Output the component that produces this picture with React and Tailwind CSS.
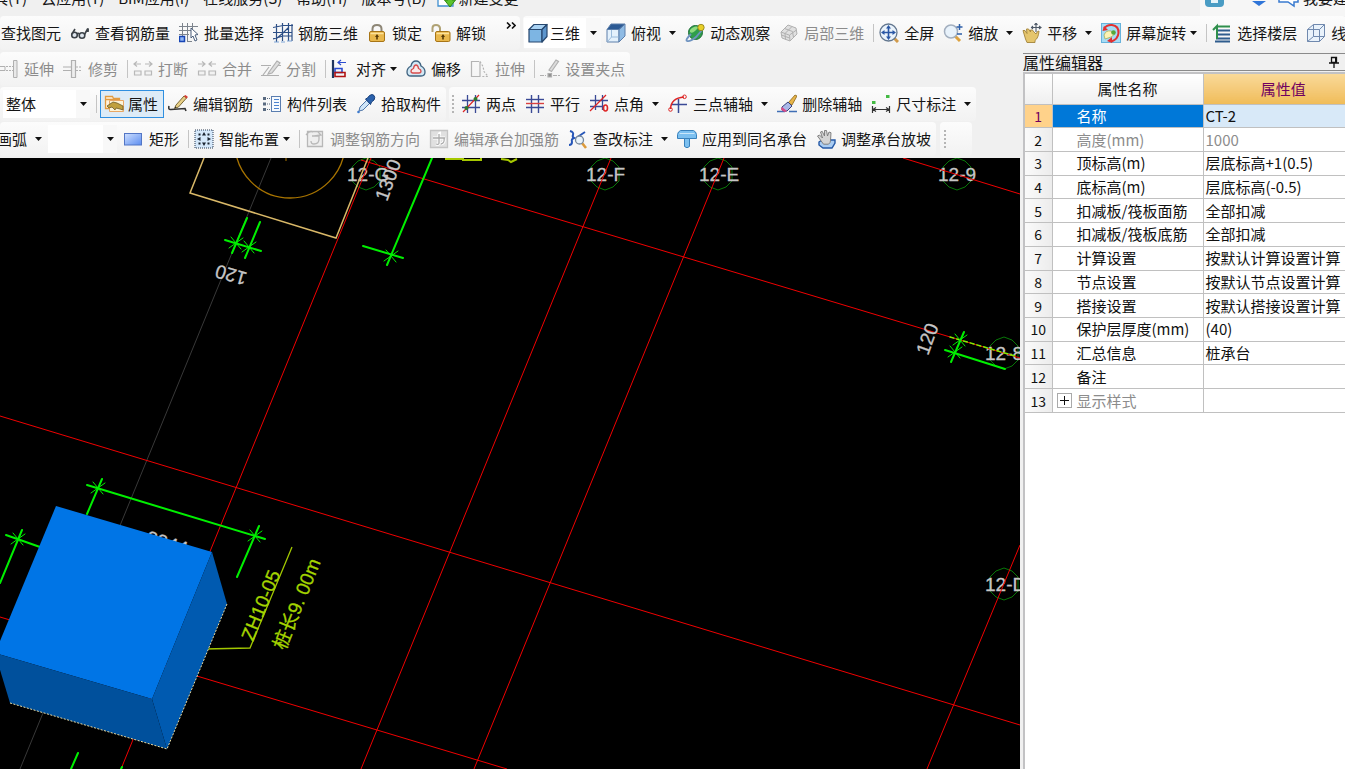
import React, { useState } from "react";

const uiFont = "font-['Noto_Sans_CJK_SC',sans-serif]";

// 20x20 toolbar glyphs
const icons = {
  glasses: (
    <g fill="none" stroke="#3c4248" strokeWidth="1.6">
      <circle cx="4.5" cy="12" r="2.8" fill="#dfe6ee" />
      <circle cx="12" cy="12.5" r="2.8" fill="#dfe6ee" />
      <path d="M7 11q1-1.5 2.4 0M2 11l3-5M14.5 11.5L17.5 6q1-1 .5 3" />
    </g>
  ),
  batch: (
    <g fill="none" stroke="#7d848d" strokeWidth="1">
      <path d="M3.500 0v13M8.500 0v19M13.500 0v6M0 3.500h19M0 7.500h12M0 11.500h10M8 18.500h5" />
      <path d="M.500 13.500h5v5h-5z" stroke="#1745b5" fill="#8fb5f5" strokeWidth="1.500" />
      <path d="M12 5l7 6.500-3 .5 2 5-2 1-2-5-2 2z" fill="#fff" stroke="#4b5f7c" />
    </g>
  ),
  mesh: (
    <g fill="none" stroke="#2d4f86" strokeWidth="1.2">
      <path d="M3.500 1v18M9.500 0v18M15.500 0v18M19 1v17M0 4.500l10-2h10M0 9.500h19M0 16l10-3h9M3 16l7-6 6-6" />
      <path d="M1 19h5M8 19h4M14 18h5" stroke="#7fa5d8" />
    </g>
  ),
  lock: (
    <g>
      <path d="M5.500 9V6q0-4 4.500-4t4.500 4v3" fill="none" stroke="#8d8676" strokeWidth="2" />
      <rect x="2.500" y="8.500" width="15" height="10" rx="1.500" fill="#e9b84c" stroke="#a87516" />
      <path d="M3.500 10.500h13" stroke="#fce29a" strokeWidth="1.500" />
      <path d="M10 11l2 3h-1.200v2.500H9.200V14H8z" fill="#573a06" />
    </g>
  ),
  unlock: (
    <g>
      <path d="M1.500 9V5q0-3 3.500-3t4 3v3" fill="none" stroke="#b0a274" strokeWidth="2" />
      <rect x="4.500" y="8.500" width="14.500" height="10" rx="1.500" fill="#e9b84c" stroke="#a87516" />
      <path d="M5.500 10.500h12.500" stroke="#fce29a" strokeWidth="1.500" />
      <path d="M12 11l2 3h-1.200v2.500h-1.600V14H10z" fill="#573a06" />
    </g>
  ),
  cube: (
    <g stroke="#26476e" strokeWidth="1.2" strokeLinejoin="round">
      <path d="M1 6.500h13v12.500H1z" fill="#7db5e3" />
      <path d="M1 6.500l5-5h13l-5 5z" fill="#a9d2f3" />
      <path d="M14 6.500l5-5v12l-5 5.500z" fill="#5c95cd" />
    </g>
  ),
  topView: (
    <g stroke="#5c7eaa" strokeWidth="1" strokeLinejoin="round">
      <path d="M1 6.500h12v12.500H1z" fill="#e4f1fc" />
      <path d="M13 6.500l6-5.500v12l-6 6z" fill="#8fbbe4" />
      <path d="M1 6.500L5 1h14l-6 5.500z" fill="#2c5a94" />
      <path d="M5.500 7v7l-4 4.500M5.500 14h7" fill="none" stroke="#9bbcdc" />
    </g>
  ),
  orbit: (
    <g>
      <circle cx="10.500" cy="9.500" r="7" fill="#2f9e4b" stroke="#1d6d36" />
      <path d="M5 7q4-5 9-3l-4 4q-3 3-5 1z" fill="#8fdc7f" />
      <path d="M2 18q-2-1 4-7M2 18q3 1 9-4l6-7" fill="none" stroke="#6e93c0" strokeWidth="1.800" />
      <circle cx="16" cy="4.500" r="3.200" fill="#e8cf28" stroke="#8c7c18" strokeWidth=".8" />
    </g>
  ),
  local3d: (
    <g fill="#e0e0e0" stroke="#b0b0b0" strokeWidth="1">
      <path d="M2 9l7-7 8 3 1 6-7 7-8-3z" />
      <path d="M5.500 5.500l8 3 1 6M2.500 12l8 3M6.500 16.500l-.500-6 7-7M11 18l-.500-6 7-5M2 9l8 3" fill="none" />
    </g>
  ),
  fullscreen: (
    <g>
      <path d="M15 15l4 4" stroke="#d19b4c" strokeWidth="3" />
      <circle cx="9.500" cy="9.500" r="8.500" fill="#eaf3fb" stroke="#63778f" strokeWidth="1.300" />
      <path d="M9.500 4v11M4 9.500h11" stroke="#2a57a5" strokeWidth="1.600" />
      <path d="M9.500 2l2.500 3.500H7zM9.500 17L7 13.500h5zM2 9.500L5.500 7v5zM17 9.500L13.500 12V7z" fill="#2a57a5" />
    </g>
  ),
  zoom: (
    <g>
      <path d="M12 13l5 5" stroke="#dca13f" strokeWidth="3" />
      <circle cx="8" cy="8.500" r="6.500" fill="#e8f2fb" stroke="#a3afbf" strokeWidth="1.500" />
      <path d="M16.500 1v6M13.500 4h6M14 11h5" stroke="#2e5fa8" strokeWidth="1.500" />
    </g>
  ),
  pan: (
    <g>
      <path d="M1 7.500q2-1.500 4 3L4.500 6q2-1.500 4 3l0-2q2-1 3.500 2l2 2q1-3 3-3-.500 7-4 9.500l0 2H5L3.500 16z" fill="#e5c56c" stroke="#a3833a" strokeWidth=".9" />
      <path d="M14 0v9M9.500 4.500h9M12.500 2L14 0l1.500 2M17 3l2 1.500-2 1.500M11 3L9.500 4.500 11 6" fill="none" stroke="#4e5967" strokeWidth="1.100" />
    </g>
  ),
  screenRotate: (
    <g>
      <rect x=".5" y=".5" width="19" height="19" fill="#a6dcf5" stroke="#67b3dc" />
      <path d="M3 5.500q3-4 8-3.500 7 1 6.500 8-.500 6-7 8.500" fill="none" stroke="#e23030" strokeWidth="2" />
      <path d="M11 14v6l-5-2zM1.500 8L3 3l4 4z" fill="#e23030" />
      <path d="M3 12q2-5 7-4l4 3-4 3-6 2z" fill="#fdf3b4" stroke="#9aa851" strokeWidth=".7" />
      <circle cx="12.500" cy="9.500" r="2.300" fill="#56a83a" />
    </g>
  ),
  floors: (
    <g strokeWidth="2">
      <path d="M6 7.500h12M5 11.500h13M4 15.500h14M3 18.500h15" stroke="#2f5d8e" />
      <path d="M5 3.500h13M1 7l4-4v13" stroke="#2f8f4c" fill="none" />
    </g>
  ),
  wireCube: (
    <g fill="#e9f2fb" stroke="#7089ae" strokeWidth="1">
      <path d="M1.500 6.500l6-5h11v12l-5 5h-12z" />
      <path d="M1.500 6.500h12l5-5M13.500 6.500v12M7.500 1.500v12h11M7.500 13.500l-6 5" fill="none" />
    </g>
  ),
  extend: (
    <g fill="none" stroke="#b0b0b0">
      <path d="M0 7.500h6v4H0" />
      <path d="M7 7.500h7M7 11.500h7" strokeDasharray="2 1" />
      <path d="M14.500 1.500h3.500v17h-3.500z" fill="#e9e9e9" />
    </g>
  ),
  trim: (
    <g fill="none" stroke="#b0b0b0" strokeWidth="1.200">
      <path d="M8.500 1.500h4v17h-4zM0 8h8M0 11.500h8" fill="#eee" />
      <path d="M13 8h6M13 11.500h6" strokeDasharray="2 1" />
    </g>
  ),
  breakApart: (
    <g fill="#f2f2f2" stroke="#b8b8b8" strokeWidth="1.200">
      <path d="M1.500 12h6.500v4H1.500zM12 12h6.500v4H12z" />
      <path d="M1 5h7M12 5h7M4 2.500L1 5l3 2.500M16 2.500L19 5l-3 2.500" fill="none" />
    </g>
  ),
  merge: (
    <g fill="#f2f2f2" stroke="#b8b8b8" strokeWidth="1.200">
      <path d="M1.500 12h6.500v4H1.500zM12 12h6.500v4H12z" />
      <path d="M1 5h7M12 5h7M5 2.500L8 5 5 7.500M15 2.500L12 5l3 2.500" fill="none" />
    </g>
  ),
  split: (
    <g fill="none" stroke="#b0b0b0" strokeWidth="1.200">
      <path d="M0 6.500h10M0 16.500h18M17 6.500h3" />
      <path d="M8 13l8-11 3 2-8 10-4 1z" fill="#dedede" />
      <path d="M2 16L8 8" />
    </g>
  ),
  align: (
    <g fill="none" strokeWidth="1.600">
      <path d="M2 1v18" stroke="#21365f" strokeWidth="2.200" />
      <path d="M4 9.500h7v4H4z" stroke="#2b4bd0" />
      <path d="M4 13.500h10v4H4z" stroke="#b01212" />
      <path d="M7 3.500h8M10 1L7 3.500 10 6" stroke="#2b4bd0" strokeWidth="1.200" />
    </g>
  ),
  offset: (
    <g strokeWidth="1.300">
      <path d="M10 2q4 0 5 5 4 2 4 6 0 4-4 4H5q-4 0-4-4 0-4 4-6 1-5 5-5z" fill="#d2e8f5" stroke="#3f6380" />
      <path d="M10 6q2 0 2.500 3.500Q15 10.500 15 12q0 2-2 2H7q-2 0-2-2 0-1.500 2.500-2.500Q8 6 10 6z" fill="#fbe9e9" stroke="#d84c4c" />
    </g>
  ),
  stretch: (
    <g fill="none" stroke="#b4b4b4" strokeWidth="1.200">
      <path d="M9 2.500H1.500v15H10V2.500" />
      <path d="M10 2.500l3 5 1 5 4 5h-7" strokeDasharray="2 1.500" />
    </g>
  ),
  grips: (
    <g fill="none" stroke="#b0b0b0" strokeWidth="1.200">
      <path d="M0 16.500h6M13 16.500h7" strokeDasharray="4 1" />
      <path d="M9 11l7-10 2.500 1.500-7 10z" fill="#dcdcdc" />
      <path d="M8 14.500h3.500V18H8z" fill="#8f8f8f" />
    </g>
  ),
  properties: (
    <g>
      <path d="M1.500 2.500h7l1 2h6v10h-14z" fill="#fff3dd" stroke="#e29a3f" strokeWidth="1.300" />
      <path d="M2 5.500h13" stroke="#e29a3f" strokeWidth="1.500" />
      <path d="M5.500 6.500h14v11h-14z" fill="#fdf4d8" stroke="#e8a765" />
      <path d="M3 12l6-4 4 1 6 3v4l-3-1-4-1-1 2-3-3-3 1z" fill="#c0a03e" stroke="#6b5a28" strokeWidth=".8" />
    </g>
  ),
  editBar: (
    <g>
      <path d="M1 12q-1 4 2 3.500l14-1 1 2.500" fill="none" stroke="#333" strokeWidth="1.600" />
      <path d="M8 11l8-9 2.500 2-8 9-4 1.500z" fill="#e8cf86" stroke="#6b5a28" strokeWidth=".9" />
      <path d="M16 2l1.500-1L20 3l-1.500 1.500z" fill="#d93a32" />
      <path d="M6.500 14.500l2-1-1-1z" fill="#222" />
    </g>
  ),
  list: (
    <g>
      <rect x="9.500" y="2.500" width="9" height="15" fill="#f6fafe" stroke="#5b7eb0" />
      <path d="M12 5.500h5M12 8.500h5M12 11.500h5M12 14.500h5" stroke="#4c83cf" strokeWidth="1.200" />
      <path d="M1 3h3v3H1zM1 8.500h3v3H1zM1 14h3v3H1z" fill="#596a80" />
      <path d="M5 4.500h3M5 10h3M5 15.500h3" stroke="#596a80" strokeDasharray="1 1" />
    </g>
  ),
  pipette: (
    <g>
      <path d="M3 17l1-4 7-7 3 3-7 7z" fill="#cfe5f8" stroke="#5277a8" />
      <path d="M9.500 5l2-1 2-2.500q3-2 4.500 0t0 4.500L15.500 8l-1 2.500z" fill="#2b62ad" stroke="#173f7a" />
      <circle cx="2.500" cy="18" r="1.300" fill="#3c7ace" />
    </g>
  ),
  twoPoint: (
    <g fill="none">
      <path d="M6.500 1v18M14.500 1v18M1 6.500h18M1 13.500h18" stroke="#3a4a96" strokeWidth="1.300" />
      <path d="M2 18L18 1" stroke="#dd2525" strokeWidth="1.200" />
      <circle cx="14.500" cy="5" r="2" fill="#2d7a2d" />
      <circle cx="5.500" cy="14" r="2" fill="#2d7a2d" />
    </g>
  ),
  parallel: (
    <g fill="none" strokeWidth="1.400">
      <path d="M6.500 1v18M13.500 1v18M1 13.500h18" stroke="#3a4a96" />
      <path d="M1 5.500h18" stroke="#3a4a96" />
      <path d="M1 9.500h18" stroke="#d94040" />
    </g>
  ),
  pointAngle: (
    <g fill="none">
      <path d="M6.500 1v15M13.500 1v15M1 6.500h18M1 12.500h14" stroke="#3a4a96" strokeWidth="1.300" />
      <path d="M1 17L17 1" stroke="#dd2525" strokeWidth="1.300" />
      <ellipse cx="16.500" cy="14" rx="2" ry="3" stroke="#dd2525" strokeWidth="1.600" />
    </g>
  ),
  threePoint: (
    <g fill="none">
      <path d="M10.500 5v14M4 10.500h15" stroke="#3a4a96" strokeWidth="1.500" />
      <path d="M2.500 15Q3 4 16 3" stroke="#dd2525" strokeWidth="1.500" />
      <circle cx="2.500" cy="15.500" r="1.800" stroke="#dd2525" />
      <circle cx="16.500" cy="2.800" r="1.800" stroke="#dd2525" />
    </g>
  ),
  eraseAxis: (
    <g>
      <path d="M0 17.500h8M12 17.500h8" stroke="#3f6eb5" strokeWidth="1.500" />
      <path d="M11 9l7-8 2 1-5 9z" fill="#e7b54a" stroke="#8c6518" strokeWidth=".8" />
      <path d="M5 13l6-5 4 4-5 5q-3 1-5-1z" fill="#a9b8e8" stroke="#39427c" />
      <path d="M5 13l5 4-2 1q-3-.500-4-3z" fill="#d94d8a" />
    </g>
  ),
  dimension: (
    <g fill="none">
      <path d="M1.500 12v7M18.500 12v7M2 15.500h16M5 13.500l-3 2 3 2M15 13.500l3 2-3 2" stroke="#333" strokeWidth="1.200" />
      <path d="M1 7h3.500v3H1zM15 1h3.500v3H15z" fill="#44ba44" />
    </g>
  ),
  rect: (
    <g>
      <defs>
        <linearGradient id="rectFill" x1="0" y1="0" x2="1" y2="1">
          <stop offset="0" stopColor="#cfe0ff" />
          <stop offset="1" stopColor="#5c8df0" />
        </linearGradient>
      </defs>
      <rect x=".5" y="4.500" width="17" height="11.500" fill="url(#rectFill)" stroke="#5376c5" />
    </g>
  ),
  smart: (
    <g>
      <rect x="1" y="1" width="18" height="18" fill="#d5e8fa" stroke="#263850" strokeDasharray="1 1" />
      <path d="M10 3l2 3.500H8zM10 17l-2-3.500h4zM3 10l3.500-2v4zM17 10l-3.500 2V8z" fill="#1b2430" />
      <path d="M4.500 4.500h2v2h-2zM13.500 4.500h2v2h-2zM4.500 13.500h2v2h-2zM13.500 13.500h2v2h-2z" fill="#1b2430" />
    </g>
  ),
  barDirection: (
    <g fill="none" stroke="#b8b8b8" strokeWidth="1.300">
      <path d="M2.500 2.500h15v15h-15z" fill="#eeeeee" />
      <path d="M1 6q4-5 7-3M7 7h7v3q0 5-5 5-3 0-3-3M13 3l3 3-7 1" />
    </g>
  ),
  editReinforce: (
    <g fill="none" strokeWidth="1.300">
      <path d="M1.500 1.500h17v17h-17z" fill="#e0e0e0" stroke="#c4c4c4" />
      <path d="M4 9h12M10 5v9q0 2-3 1M15 9q1 5-3 6M12 4q-2 0-2 2" stroke="#fff" strokeWidth="3" />
      <path d="M4 9h12M10 5v9q0 2-3 1M15 9q1 5-3 6" stroke="#ababab" />
    </g>
  ),
  checkMark: (
    <g fill="none">
      <path d="M2 2q4 1 3 4-1 2 1 3-3 1-2 4 0 3-3 3" stroke="#2455b8" strokeWidth="2" />
      <path d="M8 9l9-6" stroke="#2455b8" strokeWidth="1.800" />
      <path d="M14 14l4 5" stroke="#dc9a3a" strokeWidth="2.600" />
      <circle cx="11.500" cy="11" r="4" fill="#e9f3fb" stroke="#75879c" strokeWidth="1.300" />
    </g>
  ),
  applyCap: (
    <g fill="#7cc0f0" stroke="#3881bc" strokeWidth="1">
      <path d="M3.500 1.500h13q2.500 1 3 4v4H.500v-4q.500-3 3-4z" />
      <path d="M7.500 9.500h5v8q-2.500 2.500-5 0z" />
      <path d="M2.500 4.500h15" stroke="#c9e7fb" />
    </g>
  ),
  slope: (
    <g>
      <path d="M3 13l3-2h13v3l-3 5H7l-4-3z" fill="#a9ccf2" stroke="#2458a6" strokeWidth="1.400" />
      <path d="M1.500 7l2-1 3 3-2-6 1.700-.700L8.500 7V1.500h2L11.500 7l1.500-4 2 .700-.500 8q0 2-2 3.500H7.500z" fill="#d4d4d4" stroke="#777" strokeWidth=".9" />
    </g>
  ),
};

function Icon({ name }) {
  return (
    <svg viewBox="0 0 20 20" className="w-5 h-5 shrink-0" aria-hidden="true">
      {icons[name]}
    </svg>
  );
}

function Caret({ className = "" }) {
  return (
    <svg viewBox="0 0 7 4" className={`w-[7px] h-1 shrink-0 ${className}`} aria-hidden="true">
      <path d="M0 0h7L3.500 4z" fill="#111" />
    </svg>
  );
}

function Tool({ icon, label, muted, caret, className = "" }) {
  return (
    <button
      type="button"
      disabled={muted}
      className={`flex items-center shrink-0 whitespace-nowrap ${muted ? "text-[#8c8c8c]" : "text-[#151515]"} ${className}`}
    >
      {icon && <Icon name={icon} />}
      <span className={icon ? "ml-[5px]" : ""}>{label}</span>
      {caret && <Caret className={caret === "near" ? "ml-1" : "ml-2"} />}
    </button>
  );
}

function Divider() {
  return <span className="w-px h-[18px] bg-[#c4c4c4] -mr-1 shrink-0" />;
}

function Grip() {
  return <span className="h-[18px] border-l-2 border-dotted border-[#b5b5b5] -mr-0.5 shrink-0" />;
}

function Group({ children, className = "" }) {
  return (
    <div className={`flex items-center gap-[9px] h-[34px] rounded-sm bg-linear-to-b from-[#fcfcfc] to-[#f2f2f2] ${className}`}>
      {children}
    </div>
  );
}

function Combo({ label, options, className = "" }) {
  return (
    <span className={`relative shrink-0 h-[28px] ${className}`}>
      <select aria-label={label} className="appearance-none w-full h-full bg-white pl-[3px] pr-4 outline-none">
        {options.map((o) => (
          <option key={o}>{o}</option>
        ))}
      </select>
      <span className="absolute right-0 inset-y-0 w-[14px] bg-[#f8f8f8] flex items-center justify-center pointer-events-none">
        <Caret />
      </span>
    </span>
  );
}

function MenuBar() {
  const menus = ["工具(T)", "云应用(Y)", "BIM应用(I)", "在线服务(S)", "帮助(H)", "版本号(B)"];
  return (
    <header className="h-4 overflow-hidden flex justify-between shrink-0">
      <nav className="flex gap-[14px] leading-5 -mt-3 -ml-[22px]">
        {menus.map((m) => (
          <button type="button" key={m} className="whitespace-nowrap shrink-0 h-5">{m}</button>
        ))}
        <button type="button" className="flex items-center gap-0.5 whitespace-nowrap h-5 -ml-1">
          <svg viewBox="0 0 20 20" className="w-5 h-5" aria-hidden="true">
            <path d="M2 1h11l4 4v13H2z" fill="#fff" stroke="#3f8fd0" strokeWidth="1.300" />
            <path d="M12 8h4v4h3.500L14 19 8.500 12H12z" fill="#5cc32c" stroke="#2f8612" />
          </svg>
          新建变更
        </button>
      </nav>
      <div className="flex items-start bg-[#f6f6f6] w-[145px] pl-[5px] shrink-0">
        <svg viewBox="0 0 98 16" className="w-[98px] h-4 shrink-0" aria-hidden="true">
          <path d="M0 0h19v3q0 4-4 4H4q-4 0-4-4z" fill="#4a9cc4" />
          <path d="M6 0h7v3H6z" fill="#e6f4fa" />
          <path d="M47 1h14l-7 5z" fill="#2f75d8" />
          <path d="M74 0v2h9l6 4V2h4V0" fill="#fff" stroke="#3a7bd0" strokeWidth="1.500" />
        </svg>
        <button type="button" className="whitespace-nowrap leading-5 -mt-3">我要建议</button>
      </div>
    </header>
  );
}

function Star({ x, y }) {
  return <path d={`M${x - 7} ${y + 5}L${x + 7} ${y - 5}M${x - 5} ${y - 6}L${x + 5} ${y + 6}`} strokeWidth="1" />;
}

function AxisMark({ x, y, label }) {
  return (
    <g>
      <polygon
        points="0,-16 8,-13 14,-7 14,7 8,13 0,16 -8,13 -14,7 -14,-7 -8,-13"
        transform={`translate(${x} ${y})`}
        fill="none"
        stroke="#087808"
      />
      <text x={x - 19} y={y + 7} fill="#c6c6c6" stroke="#c6c6c6" strokeWidth=".3">{label}</text>
    </g>
  );
}

function DrawingView() {
  return (
    <main className="flex-1 min-h-0 mt-px bg-black overflow-hidden">
      <svg
        viewBox="0 158 1020 611"
        preserveAspectRatio="xMinYMin slice"
        className="block w-full h-full font-['Liberation_Sans','Noto_Sans_CJK_SC',sans-serif] text-[19px]"
      >
        <path d="M271 158L20 769" stroke="#383838" fill="none" />
        <AxisMark x={366} y={174} label="12-G" />
        <AxisMark x={605} y={174} label="12-F" />
        <AxisMark x={718} y={174} label="12-E" />
        <AxisMark x={957} y={174} label="12-9" />
        <AxisMark x={1004} y={353} label="12-8" />
        <AxisMark x={1004} y={584} label="12-D" />

        {/* axis grid */}
        <g stroke="#f00000" fill="none">
          <path d="M361 160L1020 358M903 158L1020 194M0 416L1020 725M0 617L507 769" />
          <path d="M371 158L121 769M611 158L361 769M724 158L474 769M1020 545L927 769" />
        </g>

        {/* pile cap outline */}
        <path d="M204 158L190 193 336 238 368 158" stroke="#d9b868" fill="none" strokeWidth="1.5" />
        <circle cx="290" cy="143" r="55" stroke="#a87400" fill="none" strokeWidth="1.3" />
        <path d="M286 158v3" stroke="#a87400" />
        <path d="M445 159h18v1h18v-2M501 159l7 1 3 2 6-3" stroke="#a6c800" fill="none" strokeWidth="2" />

        {/* dimension lines */}
        <g stroke="#00f000" strokeWidth="2" fill="none" strokeLinecap="round">
          <path d="M247 218L232 253M260 222L245 258M225 240L261 251" />
          <path d="M432 158L387 265M363 246L403 258" />
          <path d="M945 350L1005 369M964 332L951 362" />
          <path d="M87 485L265 539M102 479L87 514M259 526L237 577" />
          <path d="M6 535L40 547M22 530L0 583M78 753L71 769M122 767L121 769" />
          <path d="M950 337L1015 356" stroke="#7cf000" strokeWidth="1.5" strokeDasharray="4 3" />
          <Star x={236} y={243} />
          <Star x={249} y={247} />
          <Star x={391} y={256} />
          <Star x={960} y={340} />
          <Star x={955} y={352} />
          <Star x={98} y={488} />
          <Star x={255} y={536} />
          <Star x={18} y={539} />
        </g>
        <g fill="#c6c6c6" stroke="#c6c6c6" strokeWidth=".3">
          <text transform="translate(248 273) rotate(196)">120</text>
          <text transform="translate(387 202) rotate(-70)">1300</text>
          <text transform="translate(928 356) rotate(-70)">120</text>
          <text transform="translate(145 543) rotate(17)">2244</text>
        </g>

        {/* pile label */}
        <path d="M205 649L250 648 292 547" stroke="#a2c800" fill="none" strokeWidth="1.3" />
        <g fill="#a4d400" stroke="#a4d400" strokeWidth=".3">
          <text transform="translate(253 642) rotate(-68)">ZH10-05</text>
          <text transform="translate(285 651) rotate(-68)">桩长9. 00m</text>
        </g>

        {/* pile cap solid */}
        <path d="M56 506L212 552 152 699 -5 653z" fill="#0075e6" />
        <path d="M212 552L227 604 167 749 152 699z" fill="#005ab0" />
        <path d="M-5 653L152 699 167 749 10 703z" fill="#00509c" />
        <path d="M10 703L167 749 227 604" stroke="#e8d9a0" fill="none" strokeDasharray="2 1.5" />
      </svg>
    </main>
  );
}

const rows = [
  { name: "名称", value: "CT-2" },
  { name: "高度(mm)", value: "1000", muted: true },
  { name: "顶标高(m)", value: "层底标高+1(0.5)" },
  { name: "底标高(m)", value: "层底标高(-0.5)" },
  { name: "扣减板/筏板面筋", value: "全部扣减" },
  { name: "扣减板/筏板底筋", value: "全部扣减" },
  { name: "计算设置", value: "按默认计算设置计算" },
  { name: "节点设置", value: "按默认节点设置计算" },
  { name: "搭接设置", value: "按默认搭接设置计算" },
  { name: "保护层厚度(mm)", value: "(40)" },
  { name: "汇总信息", value: "桩承台" },
  { name: "备注", value: "" },
  { name: "显示样式", value: "", muted: true, expandable: true },
];

function PropertyEditor() {
  const [selected, setSelected] = useState(0);

  return (
    <aside className="w-[322px] shrink-0 ml-[3px] mt-[3px] flex flex-col overflow-hidden">
      <div className="flex items-center justify-between h-[18px] border-y border-[#8a8a8a] shrink-0">
        <h2 className="text-base leading-4">属性编辑器</h2>
        <button type="button" aria-label="固定" className="mr-1.5">
          <svg viewBox="0 0 10 12" className="w-2.5 h-3">
            <path d="M2.500 1.500h5v5h-5zM0 7h10M5 7v5" fill="none" stroke="#111" strokeWidth="1.300" />
            <path d="M7 1v6" stroke="#111" strokeWidth="2" />
          </svg>
        </button>
      </div>
      <div className="flex-1 mt-px border-t-2 border-l-2 border-[#c2c2c4] bg-white">
        <table className="w-full h-[339px] table-fixed border-collapse leading-5">
          <colgroup>
            <col className="w-[27px]" />
            <col className="w-[151px]" />
            <col />
          </colgroup>
          <thead>
            <tr className="h-[30px]">
              <th className="border-r border-b border-[#c0c0c0] bg-linear-to-b from-white to-[#efefef]" />
              <th className="font-normal border-r border-b border-[#c0c0c0] bg-linear-to-b from-white to-[#f0f0f0]">属性名称</th>
              <th className="font-normal border-b border-[#c0c0c0] bg-linear-to-b from-[#f9d998] to-[#f0bc58] text-[#700060] pl-[18px]">属性值</th>
            </tr>
          </thead>
          <tbody>
            {rows.map((row, i) => {
              const active = i === selected;
              return (
                <tr key={row.name} onClick={() => setSelected(i)} className={row.muted ? "text-[#8c8c8c]" : "text-[#111]"}>
                  <td
                    className={`p-0 text-center text-sm leading-5 border-r border-b border-[#c0c0c0] ${
                      active ? "bg-[#ffd28a] text-[#700060]" : "bg-linear-to-r from-[#fafafa] to-[#ececec] text-[#111]"
                    }`}
                  >
                    {i + 1}
                  </td>
                  <td className={`p-0 border-r border-b border-[#c0c0c0] whitespace-nowrap ${active ? "bg-[#0078d8] text-white" : ""}`}>
                    <span className="flex items-center">
                      <span className="w-[24px] flex justify-center">
                        {row.expandable && (
                          <button
                            type="button"
                            aria-label="展开"
                            className="w-[15px] h-[15px] border border-[#aaa] bg-white text-black flex items-center justify-center"
                          >
                            <svg viewBox="0 0 9 9" className="w-[9px] h-[9px]">
                              <path d="M0 4.500h9M4.500 0v9" stroke="#111" />
                            </svg>
                          </button>
                        )}
                      </span>
                      {row.name}
                    </span>
                  </td>
                  <td className={`p-0 pl-0.5 border-b border-[#c0c0c0] whitespace-nowrap overflow-hidden ${active ? "bg-[#d8e9f8]" : ""}`}>
                    {row.value}
                  </td>
                </tr>
              );
            })}
          </tbody>
        </table>
      </div>
    </aside>
  );
}

export default function App() {
  return (
    <div className={`h-screen flex flex-col overflow-hidden bg-[#f0f0f0] text-[15px] leading-5 text-[#151515] ${uiFont}`}>
      <MenuBar />

      <div className="flex shrink-0 gap-[3px] overflow-hidden">
        <Group className="pl-px pr-1">
          <Tool label="查找图元" />
          <Tool icon="glasses" label="查看钢筋量" />
          <Tool icon="batch" label="批量选择" />
          <Tool icon="mesh" label="钢筋三维" />
          <Tool icon="lock" label="锁定" />
          <Tool icon="unlock" label="解锁" />
          <button type="button" aria-label="更多" className="ml-[11px] self-start mt-1.5">
            <svg viewBox="0 0 10 7" className="w-2.5 h-[7px]">
              <path d="M1 .5L4 3.500 1 6.500M6 .5L9 3.500 6 6.500" fill="none" stroke="#111" strokeWidth="1.600" />
            </svg>
          </button>
        </Group>
        <Group className="flex-1 pl-px">
          <span className="flex items-center h-[30px] bg-white px-1 -mr-1 shrink-0">
            <button type="button" className="flex items-center gap-0.5">
              <Icon name="cube" />
              三维
            </button>
            <button type="button" aria-label="视图模式" className="ml-1.5 -mr-1 w-[15px] h-[30px] flex items-center justify-center bg-[#f8f8f8]">
              <Caret />
            </button>
          </span>
          <Tool icon="topView" label="俯视" caret="far" />
          <Tool icon="orbit" label="动态观察" />
          <Tool icon="local3d" label="局部三维" muted />
          <Divider />
          <Tool icon="fullscreen" label="全屏" />
          <Tool icon="zoom" label="缩放" caret="far" />
          <Tool icon="pan" label="平移" caret="far" />
          <Tool icon="screenRotate" label="屏幕旋转" caret="near" />
          <Divider />
          <Tool icon="floors" label="选择楼层" />
          <Tool icon="wireCube" label="线框" />
        </Group>
      </div>

      <div className="flex flex-1 min-h-0">
        <div className="flex flex-col flex-1 min-w-0 gap-px pt-0.5 overflow-hidden">
          <div className="flex shrink-0">
            <Group className="pr-[5px]">
              <Tool icon="extend" label="延伸" muted className="-ml-px" />
              <Tool icon="trim" label="修剪" muted />
              <Divider />
              <Tool icon="breakApart" label="打断" muted />
              <Tool icon="merge" label="合并" muted />
              <Tool icon="split" label="分割" muted />
              <Divider />
              <Tool icon="align" label="对齐" caret="near" />
              <Tool icon="offset" label="偏移" />
              <Tool icon="stretch" label="拉伸" muted />
              <Divider />
              <Tool icon="grips" label="设置夹点" muted />
            </Group>
          </div>

          <div className="flex shrink-0 gap-[3px]">
            <Group className="pl-[3px] pr-[5px]">
              <Combo label="显示范围" options={["整体"]} className="w-[87px] -mr-[3px]" />
              <Divider />
              <button
                type="button"
                aria-pressed="true"
                className="flex items-center gap-1 h-[28px] pl-[3px] pr-[5px] -ml-0.5 -mr-[5px] border border-[#2f8fe0] bg-[#dcebf7] shrink-0"
              >
                <Icon name="properties" />
                属性
              </button>
              <Tool icon="editBar" label="编辑钢筋" />
              <Tool icon="list" label="构件列表" />
              <Tool icon="pipette" label="拾取构件" />
            </Group>
            <Group className="pl-[3px] pr-[5px]">
              <Grip />
              <Tool icon="twoPoint" label="两点" />
              <Tool icon="parallel" label="平行" />
              <Tool icon="pointAngle" label="点角" caret="far" />
              <Tool icon="threePoint" label="三点辅轴" caret="far" />
              <Tool icon="eraseAxis" label="删除辅轴" />
              <Tool icon="dimension" label="尺寸标注" caret="far" />
            </Group>
          </div>

          <div className="flex shrink-0 gap-1">
            <Group className="pr-[5px]">
              <Tool label="画弧" caret="far" className="-ml-[3px]" />
              <Combo label="绘制方式" options={[""]} className="w-[69px] -ml-[3px] -mr-0.5" />
              <Tool icon="rect" label="矩形" />
              <Divider />
              <Tool icon="smart" label="智能布置" caret="near" />
              <Divider />
              <Tool icon="barDirection" label="调整钢筋方向" muted />
              <Tool icon="editReinforce" label="编辑承台加强筋" muted />
              <Tool icon="checkMark" label="查改标注" caret="far" />
              <Tool icon="applyCap" label="应用到同名承台" />
              <Tool icon="slope" label="调整承台放坡" />
            </Group>
            <Group className="pl-1 pr-7">
              <Grip />
            </Group>
          </div>

          <DrawingView />
        </div>

        <PropertyEditor />
      </div>
    </div>
  );
}
